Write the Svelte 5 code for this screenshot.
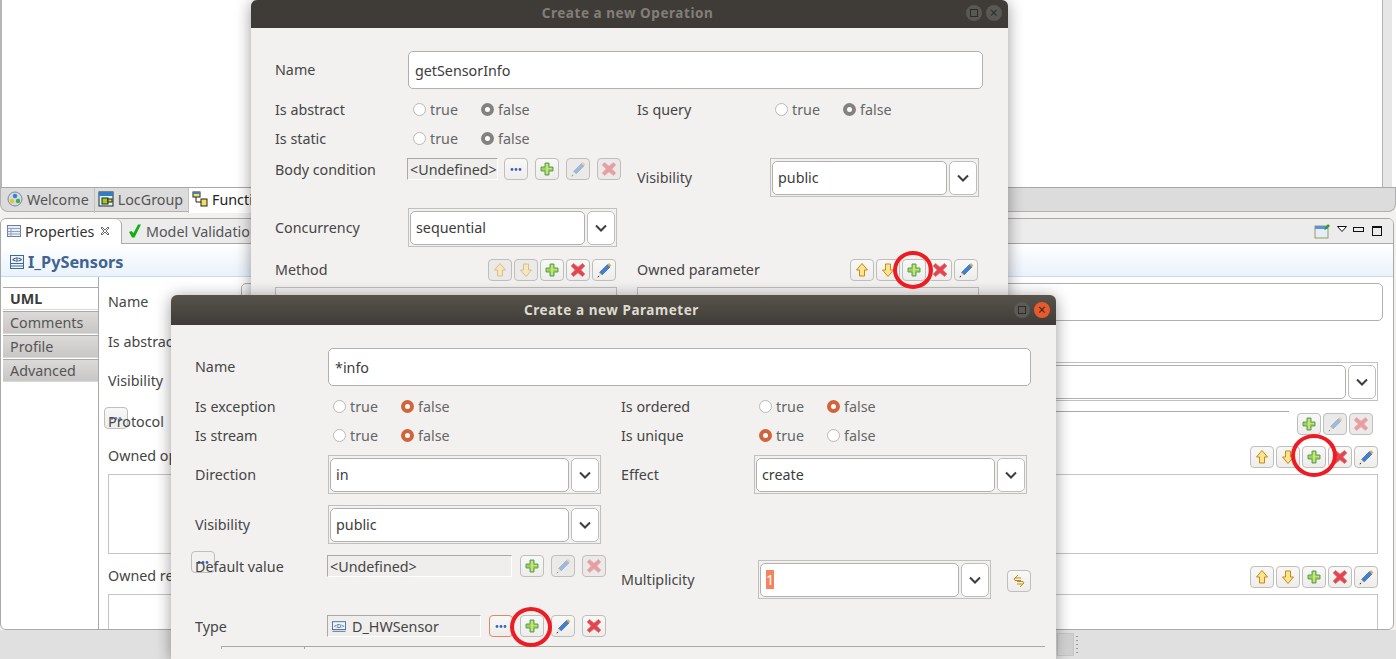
<script>
  const owned = ['up', 'down', 'add', 'del', 'edit'];
</script>

{#snippet icon(kind)}
  <svg class="ico" viewBox="0 0 16 16" width="16" height="16">
    {#if kind === 'add'}
      <path d="M6 2h4v4h4v4h-4v4H6v-4H2V6h4z" fill="#a5cf52" stroke="#4a9a58" stroke-width=".9" />
      <path d="M7 3h2v4h4v1H9v5H7z" fill="#c7e27a" />
    {:else if kind === 'del'}
      <path d="M3.500 1.500 8 5.200l4.500-3.700 2.300 2.400L10.800 8l4 4.100-2.300 2.400L8 10.800l-4.500 3.700-2.300-2.400 4-4.100-4-4.100z" fill="#e8424c" stroke="#c9737a" stroke-width=".8" />
    {:else if kind === 'edit'}
      <path d="M3.500 10.500 11.500 2.500 14 5 6 13z" fill="#3f7fd6" stroke="#2a5a9e" stroke-width=".6" />
      <path d="M11.500 2.500 13 1l2.500 2.500L14 5z" fill="#e9b04a" />
      <path d="M3.500 10.500 6 13l-3.500 1.500z" fill="#f2dfb8" />
      <path d="M1.500 15.500l1.800-.7-1.100-1.100z" fill="#222" />
    {:else if kind === 'up'}
      <path d="M8 1.500 13.500 8h-3v6h-5V8h-3z" fill="#ffe48f" stroke="#c48a12" />
    {:else if kind === 'down'}
      <path d="M8 14.500 13.500 8h-3V2h-5v6h-3z" fill="#ffe48f" stroke="#c48a12" />
    {:else if kind === 'dots'}
      <circle cx="4" cy="8.500" r="1.400" fill="#3f62b8" /><circle cx="8" cy="8.500" r="1.400" fill="#3f62b8" /><circle cx="12" cy="8.500" r="1.400" fill="#3f62b8" />
    {:else if kind === 'sync'}
      <path d="M7 2 3 6l1 1.500h6M9 14l4-4-1-1.500H6M4 5h6M12 11H6" fill="none" stroke="#c8890f" stroke-width="1" />
    {/if}
  </svg>
{/snippet}

{#snippet tool(kind, off = false)}
  <span class="tool" class:off>{@render icon(kind)}</span>
{/snippet}

{#snippet chevron()}
  <svg viewBox="0 0 14 10" width="14" height="10"><path d="M2 2.500 7 7.500l5-5" fill="none" stroke="#3d3d3d" stroke-width="2" /></svg>
{/snippet}

{#snippet combo(value)}
  <div class="combo">
    <span class="entry">{value}</span>
    <span class="drop">{@render chevron()}</span>
  </div>
{/snippet}

{#snippet radios(first)}
  <div class="radios">
    <span class="radio"><i class:on={first}></i>true</span>
    <span class="radio"><i class:on={!first}></i>false</span>
  </div>
{/snippet}

<div class="desktop">
  <div class="editor">
    <div class="scroll"></div>
  </div>

  <div class="tabs-top">
    <span class="vtab">
      <svg viewBox="0 0 16 16" width="16" height="16"><circle cx="8" cy="8" r="7" fill="#cfdbe6" stroke="#7c8a96" /><circle cx="5" cy="10" r="2.200" fill="#e3c81e" /><circle cx="11" cy="10" r="2.200" fill="#4aa84a" /><circle cx="8" cy="5" r="2.200" fill="#3f7fc8" /></svg>
      Welcome
    </span>
    <span class="vtab">
      <svg viewBox="0 0 16 16" width="16" height="16"><rect x="1" y="1" width="14" height="14" fill="#dff0f7" stroke="#1d2b2b" /><rect x="1" y="1" width="14" height="4" fill="#2f7fc0" /><rect x="4" y="7" width="6" height="6" fill="#a7c520" stroke="#1d2b2b" /><rect x="10" y="8" width="4" height="3" fill="#e8d420" stroke="#1d2b2b" /></svg>
      LocGroup
    </span>
    <span class="vtab cur">
      <svg viewBox="0 0 16 16" width="16" height="16"><rect x="1" y="1" width="7" height="5" fill="#f6e05a" stroke="#222" /><rect x="1" y="1" width="7" height="2" fill="#3f7fc8" /><rect x="9" y="8" width="6" height="7" fill="#f6e05a" stroke="#222" /><path d="M4 6v5h5" fill="none" stroke="#222" /></svg>
      Function
    </span>
  </div>

  <div class="panel">
    <div class="ptabs">
      <span class="ptab cur">
        <svg viewBox="0 0 16 16" width="16" height="16"><rect x="1.500" y="2.500" width="13" height="11" fill="#e8eef6" stroke="#6b7fa6" /><path d="M1.500 5.500h13M1.500 8.500h13M1.500 11h13M5 5.500v8" stroke="#8fa0c0" fill="none" /></svg>
        Properties
        <svg class="closex" viewBox="0 0 10 10" width="10" height="10"><path d="M2 1 5 4l3-3 1 1-3 3 3 3-1 1-3-3-3 3-1-1 3-3-3-3z" fill="#fff" stroke="#444" stroke-width=".8" /></svg>
      </span>
      <span class="ptab">
        <svg viewBox="0 0 16 16" width="16" height="16"><path d="M2 9 5 14.500h2.500L14 1.500h-3L6.500 10 4.500 8z" fill="#12b012" /></svg>
        Model Validation
      </span>
      <span class="pactions">
        <svg viewBox="0 0 16 16" width="16" height="16"><rect x="1" y="3" width="13" height="12" fill="#e4eef6" stroke="#a39668" /><rect x="1" y="3" width="13" height="3" fill="#5b93d6" /><path d="m10 6 4-5 2 2-5 4z" fill="#2f9a3f" /></svg>
        <svg class="menu" viewBox="0 0 10 6" width="10" height="6"><path d="M.5.500h9L5 5.500z" fill="#fff" stroke="#111" /></svg>
        <span class="minb"></span>
        <span class="maxb"></span>
      </span>
    </div>

    <div class="ptitle">
      <svg viewBox="0 0 16 16" width="16" height="16"><rect x="1.500" y="1.500" width="13" height="13" fill="#eef4fb" stroke="#3d6a9c" /><path d="M1.500 9.500h13M1.500 12h13" stroke="#3d6a9c" /><text x="8" y="8" font-size="6.500" text-anchor="middle" fill="#1d3f6b" font-family="Liberation Sans">&lt;I&gt;</text></svg>
      I_PySensors
    </div>

    <div class="pbody">
      <div class="side">
        <span class="stab cur">UML</span>
        <span class="stab">Comments</span>
        <span class="stab">Profile</span>
        <span class="stab">Advanced</span>
      </div>

      <div class="uml">
        <div class="frow name"><span class="lift">Name</span><span class="entry"></span></div>
        <div class="frow flag"><span>Is abstract</span></div>
        <div class="frow vis"><span class="lift">Visibility</span>{@render combo('')}</div>
        <div class="frow proto">
          <span class="over">Protocol</span>
          <div class="ref"></div>
          <div class="tools wide">{@render tool('add')}{@render tool('edit', true)}{@render tool('del', true)}</div>
          <span class="tool stray">{@render icon('dots')}</span>
        </div>
        <div class="frow list"><span>Owned operation</span><div class="tools">{#each owned as k}{@render tool(k)}{/each}</div></div>
        <div class="box op"></div>
        <div class="frow list"><span>Owned reception</span><div class="tools">{#each owned as k}{@render tool(k)}{/each}</div></div>
        <div class="box"></div>
      </div>
    </div>
  </div>

  <div class="status">
    <span class="meter"></span><span class="grip"></span>
  </div>

  <section class="dlg op-dlg">
    <header>
      <span></span>
      <b>Create a new Operation</b>
      <span class="wbtns"><i class="wmax"></i><i class="wclose"></i></span>
    </header>
    <div class="form">
      <span class="lbl first">Name</span>
      <span class="entry wide-entry">getSensorInfo</span>

      <span class="lbl">Is abstract</span>{@render radios(false)}
      <span></span>
      <span class="lbl">Is query</span>{@render radios(false)}

      <span class="lbl">Is static</span>{@render radios(false)}
      <span class="fill"></span>

      <span class="lbl top s">Body condition</span>
      <div class="top s tools near">
        <span class="ref-text tight">&lt;Undefined&gt;</span>
        {@render tool('dots')}{@render tool('add')}{@render tool('edit', true)}{@render tool('del', true)}
      </div>
      <span></span>
      <span class="lbl top t">Visibility</span>
      <div class="top">{@render combo('public')}</div>

      <span class="lbl top t">Concurrency</span>
      <div class="top">{@render combo('sequential')}</div>
      <span class="fill"></span>

      <span class="lbl top s flat">Method</span>
      <div class="top tools end">{@render tool('up', true)}{@render tool('down', true)}{@render tool('add')}{@render tool('del')}{@render tool('edit')}</div>
      <span></span>
      <span class="lbl top s flat">Owned parameter</span>
      <div class="top tools end">{#each owned as k}{@render tool(k)}{/each}</div>

      <div class="tbl left"></div>
      <span></span>
      <div class="tbl right"></div>
    </div>
  </section>

  <section class="dlg par-dlg">
    <span class="tool stray2">{@render icon('dots')}</span>
    <header>
      <span></span>
      <b>Create a new Parameter</b>
      <span class="wbtns"><i class="wmax"></i><i class="wclose"></i></span>
    </header>
    <div class="form">
      <span class="lbl first">Name</span>
      <span class="entry wide-entry">*info</span>

      <span class="lbl">Is exception</span>{@render radios(false)}
      <span></span>
      <span class="lbl">Is ordered</span>{@render radios(false)}

      <span class="lbl">Is stream</span>{@render radios(false)}
      <span></span>
      <span class="lbl">Is unique</span>{@render radios(true)}

      <span class="lbl top t">Direction</span>
      <div class="top">{@render combo('in')}</div>
      <span></span>
      <span class="lbl top t">Effect</span>
      <div class="top">{@render combo('create')}</div>

      <span class="lbl top t">Visibility</span>
      <div class="top">{@render combo('public')}</div>
      <span class="fill"></span>

      <span class="lbl top s">Default value</span>
      <div class="top tools near">
        <span class="ref-text">&lt;Undefined&gt;</span>
        {@render tool('add')}{@render tool('edit', true)}{@render tool('del', true)}
      </div>
      <span></span>
      <span class="lbl top t ten">Multiplicity</span>
      <div class="top ten multi">
        <div class="combo">
          <span class="entry"><mark>1</mark></span>
          <span class="drop">{@render chevron()}</span>
        </div>
        {@render tool('sync')}
      </div>

      <span class="lbl top s">Type</span>
      <div class="top tools near">
        <span class="ref-text typed">
          <svg viewBox="0 0 16 12" width="14" height="11"><rect x=".5" y=".5" width="15" height="9" fill="#eef4fb" stroke="#3d6a9c" /><path d="M.5 11.500h15" stroke="#3d6a9c" /><text x="8" y="7.500" font-size="6.500" text-anchor="middle" fill="#1d3f6b" font-family="Liberation Sans">&lt;D&gt;</text></svg>
          D_HWSensor
        </span>
        <span class="tool hot">{@render icon('dots')}</span>
        {@render tool('add')}{@render tool('edit')}{@render tool('del')}
      </div>
      <span class="fill"></span>

      <div class="rule"><span></span></div>
    </div>
  </section>

  <span class="ring r1"></span>
  <span class="ring r2"></span>
  <span class="ring r3"></span>
</div>

<style>
  :global(body) {
    overflow: hidden;
  }

  .desktop {
    position: relative;
    width: 1396px;
    height: 659px;
    overflow: hidden;
    background: #f2f1f0;
    font-family: "Noto Sans", sans-serif;
    font-size: 14.3px;
    color: #454545;
    display: flex;
    flex-direction: column;
  }

  .editor {
    height: 187px;
    flex: none;
    background: #fff;
    border-left: 2px solid #b5b5b3;
    display: flex;
    justify-content: flex-end;
    box-sizing: border-box;
  }
  .scroll {
    width: 9px;
    margin-right: 4px;
    background: #e6e6e6;
    border-left: 1px solid #b5b5b3;
  }

  .tabs-top {
    height: 25px;
    box-sizing: border-box;
    background: #dcdcdc;
    border: 1px solid #b0b0ae;
    border-top-color: #a8a8a6;
    border-radius: 0 0 8px 8px;
    padding-left: 6px;
    display: flex;
    margin-bottom: 6px;
    flex: none;
  }
  .vtab {
    display: flex;
    align-items: center;
    gap: 4px;
    padding: 0 5px 3px 0;
    color: #555;
    border-right: 1px solid #c2c2c2;
    height: 22px;
  }
  .vtab + .vtab {
    padding-left: 3px;
  }
  .vtab.cur {
    background: #fff;
    color: #222;
    border-radius: 0 0 6px 0;
    padding-right: 40px;
  }

  .panel {
    height: 412px;
    flex: none;
    box-sizing: border-box;
    background: #fff;
    border: 1px solid #a9a9a7;
    border-radius: 6px;
    margin-right: 2px;
    overflow: hidden;
    display: flex;
    flex-direction: column;
  }
  .ptabs {
    height: 25px;
    flex: none;
    box-sizing: border-box;
    background: #ececec;
    border-bottom: 1px solid #a9a9a7;
    display: flex;
    align-items: center;
  }
  .ptab {
    display: flex;
    align-items: center;
    gap: 3px;
    height: 25px;
    padding: 0 5px;
    color: #555;
  }
  .ptab.cur {
    background: #fff;
    color: #333;
    width: 110px;
    border-right: 1px solid #a9a9a7;
    border-radius: 6px 6px 0 0;
  }
  .closex {
    margin-left: 3px;
  }
  .pactions {
    margin-left: auto;
    display: flex;
    align-items: center;
    padding-right: 11px;
  }
  .menu {
    margin: 0 6px 4px 7px;
  }
  .minb {
    width: 9px;
    height: 3px;
    border: 1px solid #111;
    margin: 0 8px 4px 0;
  }
  .maxb {
    width: 8px;
    height: 7px;
    border: 1px solid #111;
    border-top-width: 2px;
  }

  .ptitle {
    height: 33px;
    flex: none;
    box-sizing: border-box;
    padding: 3px 8px 0;
    display: flex;
    align-items: center;
    gap: 3px;
    font-weight: 700;
    font-size: 16.3px;
    color: #3f6491;
    background: linear-gradient(#fff, #eaf2fb);
    border-bottom: 1px solid #c6dcf2;
  }

  .pbody {
    flex: 1;
    min-height: 0;
    display: flex;
  }
  .side {
    width: 96px;
    flex: none;
    box-sizing: border-box;
    margin-left: 2px;
    padding-top: 10px;
    border-right: 1px solid #a9a9a7;
    display: flex;
    flex-direction: column;
    gap: 1px;
    background: #fff;
  }
  .stab {
    height: 23px;
    box-sizing: border-box;
    padding-left: 7px;
    display: flex;
    align-items: center;
    color: #555;
    background: linear-gradient(#dcdad8, #c9c7c5);
    border-top: 1px solid #a9a9a7;
    border-bottom: 1px solid #d8d8d8;
  }
  .stab.cur {
    background: #fff;
    color: #3c3c3c;
    font-weight: 700;
  }

  .uml {
    flex: 1;
    padding: 6px 15px 0 9px;
    display: flex;
    flex-direction: column;
    min-width: 0;
  }
  .frow {
    display: grid;
    grid-template-columns: 133px 1fr;
    align-items: center;
    position: relative;
    flex: none;
    white-space: nowrap;
  }
  .lift {
    margin-top: -2px;
  }
  .frow.name {
    height: 38px;
    margin-right: -5px;
  }
  .frow.name .entry {
    height: 38px;
  }
  .frow.flag {
    height: 29px;
    margin-top: 6px;
  }
  .frow.vis {
    margin-top: 6px;
    height: 39px;
  }
  .frow.proto {
    margin-top: 6px;
    height: 27px;
    grid-template-columns: 133px 1fr 86px;
    margin-right: -5px;
  }
  .over {
    position: relative;
    z-index: 1;
  }
  .ref {
    border-top: 1px solid #a9a9a7;
    height: 23px;
    margin-top: 4px;
    margin-right: 8px;
  }
  .wide {
    gap: 7px;
    margin-top: 5px;
  }
  .stray {
    position: absolute;
    left: -4px;
    top: 0;
    background: transparent;
  }
  .stray .ico {
    opacity: 0.7;
  }
  .frow.list {
    height: 22px;
    margin-top: 12px;
    grid-template-columns: 133px 1fr;
  }
  .frow.list > span {
    margin-top: -3px;
  }
  .frow.list .tools {
    justify-content: flex-end;
  }
  .box {
    height: 80px;
    flex: none;
    margin-top: 6px;
    box-sizing: border-box;
    border: 1px solid #c4c4c4;
  }

  .status {
    flex: 1;
    background: #e0e0e0;
    display: flex;
    align-items: center;
    padding-left: 1057px;
    gap: 2px;
  }
  .meter {
    width: 15px;
    height: 21px;
    border: 1px solid #c8c8c8;
    background: linear-gradient(90deg, #dcdcdc, #cfcfcf);
  }
  .grip {
    width: 2px;
    height: 18px;
    background: repeating-linear-gradient(#999 0 1px, transparent 1px 4px);
  }

  .dlg {
    position: absolute;
    background: #f2f1f0;
    border-radius: 6px 6px 0 0;
    box-shadow: 0 2px 16px rgba(0, 0, 0, 0.4);
    overflow: hidden;
  }
  .dlg header {
    display: grid;
    grid-template-columns: 1fr auto 1fr;
    align-items: center;
    font-size: 13.5px;
    letter-spacing: 0.55px;
  }
  .dlg header b {
    margin-right: 4px;
  }
  .wbtns {
    justify-self: end;
    display: flex;
    gap: 4px;
    padding-right: 6px;
  }
  .wbtns i {
    width: 16px;
    height: 16px;
    border-radius: 50%;
    background: #5c5a56;
    position: relative;
  }
  .wmax::after {
    content: "";
    position: absolute;
    inset: 4px;
    border: 1px solid #2e2c29;
  }
  .wclose::after {
    content: "×";
    position: absolute;
    inset: 0;
    text-align: center;
    line-height: 15px;
    font-style: normal;
    font-size: 14px;
    color: #2e2c29;
  }

  .op-dlg {
    left: 251px;
    top: 0;
    width: 757px;
    height: 340px;
  }
  .op-dlg header {
    height: 28px;
    box-sizing: border-box;
    padding-bottom: 2px;
    background: #3f3c38;
    color: #827f79;
  }
  .op-dlg .wbtns i {
    background: #5a5853;
  }
  .op-dlg .form {
    grid-template-rows: 44px 29px 29px 50px 51px 33px auto;
  }
  .op-dlg .radio i.on {
    background: #fff;
    border: 4px solid #84827f;
  }

  .par-dlg {
    left: 171px;
    top: 295px;
    width: 885px;
    height: 364px;
    z-index: 1;
  }
  .par-dlg header {
    height: 30px;
    background: linear-gradient(#57534b, #3f3c38);
    color: #dfdbd2;
  }
  .par-dlg .wclose {
    background: #e9592a;
  }
  .par-dlg .form {
    grid-template-rows: 44px 29px 29px 50px 50px 60px 36px auto;
    grid-template-columns: 133px 273px 20px 133px 273px;
    position: relative;
  }
  .par-dlg .radio i.on {
    background: #fff;
    border: 4px solid #d3633a;
  }

  .form {
    display: grid;
    grid-template-columns: 133px 209px 20px 133px 209px;
    padding: 23px 0 0 24px;
    align-items: center;
  }
  .fill {
    grid-column: 3 / -1;
  }
  .lbl {
    white-space: nowrap;
    color: #454545;
  }
  .lbl.first {
    align-self: start;
    line-height: 38px;
  }
  .top {
    align-self: start;
    margin-top: 5px;
  }
  .ten {
    margin-top: 10px;
  }
  .lbl.s {
    height: 22px;
    line-height: 24px;
  }
  .lbl.flat {
    line-height: 22px;
  }
  .lbl.t {
    height: 39px;
    line-height: 40px;
  }
  .entry {
    display: flex;
    align-items: center;
    box-sizing: border-box;
    height: 34px;
    background: #fff;
    border: 1px solid #b0b0ae;
    border-radius: 5px;
    padding-left: 6px;
    color: #3c3c3c;
    min-width: 0;
  }
  .wide-entry {
    grid-column: 2 / -1;
    align-self: start;
    height: 38px;
    margin-right: -4px;
  }
  .radios {
    display: grid;
    grid-template-columns: 68px 68px;
    padding-left: 5px;
  }
  .radio {
    display: flex;
    align-items: center;
    gap: 4px;
    color: #666;
  }
  .radio i {
    width: 13px;
    height: 13px;
    box-sizing: border-box;
    border-radius: 50%;
    border: 1px solid #b8b8b6;
    background: #fff;
  }

  .combo {
    display: flex;
    gap: 2px;
    box-sizing: border-box;
    height: 39px;
    padding: 2px 1px;
    border: 1px solid #c0c0be;
  }
  .combo .entry {
    flex: 1;
    padding-left: 5px;
    padding-bottom: 1px;
  }
  .drop {
    flex: none;
    width: 28px;
    height: 34px;
    box-sizing: border-box;
    background: #fff;
    border: 1px solid #bdbdbb;
    border-radius: 5px;
    display: flex;
    align-items: center;
    justify-content: center;
  }
  .par-dlg .multi {
    display: flex;
    align-items: center;
    gap: 16px;
    margin-left: 4px;
  }
  .multi .combo {
    width: 233px;
    flex: none;
  }
  .multi .tool {
    margin-top: 3px;
  }
  mark {
    background: #f4845c;
    color: #fff;
  }

  .tools {
    display: flex;
    gap: 2px;
    align-items: center;
  }
  .end {
    justify-content: flex-end;
    padding-right: 1px;
  }
  .near {
    gap: 7px;
    margin-left: -1px;
    white-space: nowrap;
  }
  .tool {
    width: 24px;
    height: 22px;
    flex: none;
    box-sizing: border-box;
    border: 1px solid #bebebc;
    border-radius: 4px;
    background: linear-gradient(#f8f8f7, #eeedec);
    display: flex;
    align-items: center;
    justify-content: center;
  }
  .tool.off {
    background: #ebeae9;
  }
  .tool.off .ico {
    opacity: 0.45;
  }
  .tool.hot {
    border-color: #d98a6c;
  }
  .stray2 {
    position: absolute;
    left: 20px;
    top: 256px;
    background: #f2f1f0;
  }
  .ref-text {
    display: flex;
    flex: none;
    align-items: center;
    gap: 6px;
    box-sizing: border-box;
    width: 185px;
    height: 22px;
    padding-left: 2px;
    background: #efeeec;
    border-top: 1px solid #a9a9a7;
    border-left: 1px solid #a9a9a7;
    border-right: 1px solid #fff;
    border-bottom: 1px solid #fff;
    margin-right: 1px;
  }
  .ref-text.tight {
    width: 91px;
    margin-right: -1px;
  }
  .ref-text.typed {
    width: 154px;
    padding-left: 4px;
  }

  .tbl {
    grid-row: 7;
    height: 60px;
    box-sizing: border-box;
    border: 1px solid #bdbdbb;
    align-self: start;
  }
  .tbl.left {
    grid-column: 1 / 3;
  }
  .tbl.right {
    grid-column: 4 / 6;
  }
  .rule {
    grid-column: 1 / -1;
    margin: 0 -18px 0 26px;
    border-top: 1px solid #a9a8a3;
    height: 12px;
  }
  .rule span {
    display: block;
    width: 82px;
    height: 2px;
    border-right: 1px solid #a9a8a3;
    border-left: 1px solid #a9a8a3;
  }

  .ring {
    position: absolute;
    z-index: 2;
    box-sizing: border-box;
    border: 4px solid #ed1c24;
    border-radius: 50%;
  }
  .r1 {
    left: 893px;
    top: 251px;
    width: 40px;
    height: 38px;
  }
  .r2 {
    left: 1291px;
    top: 434px;
    width: 46px;
    height: 43px;
  }
  .r3 {
    left: 510px;
    top: 607px;
    width: 42px;
    height: 40px;
  }
</style>
